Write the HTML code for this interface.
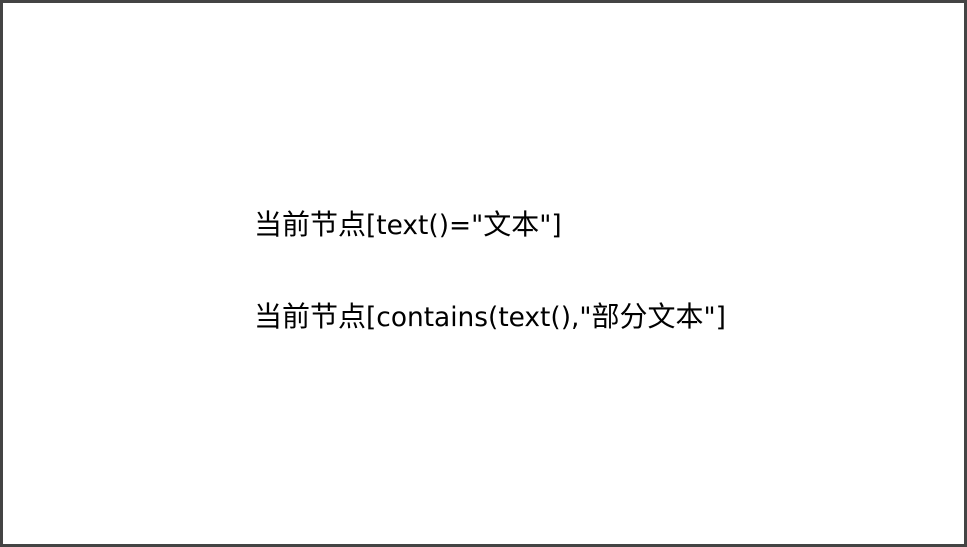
<!DOCTYPE html>
<html><head><meta charset="utf-8"><style>
html,body{margin:0;padding:0;}
body{width:967px;height:547px;box-sizing:border-box;border:3px solid #444;background:#fff;position:relative;overflow:hidden;font-family:"DejaVu Sans","Noto Sans CJK SC",sans-serif;color:#000;}
.t{position:absolute;left:251px;font-size:26.4px;line-height:32px;white-space:nowrap;}
.c{font-family:"Noto Sans CJK SC",sans-serif;font-size:28px;}
</style></head><body>
<div class="t" style="top:204px"><span class="c">当前节点</span>[text()="<span class="c">文本</span>"]</div>
<div class="t" style="top:296px"><span class="c">当前节点</span>[contains(text(),"<span class="c">部分文本</span>"]</div>
</body></html>
